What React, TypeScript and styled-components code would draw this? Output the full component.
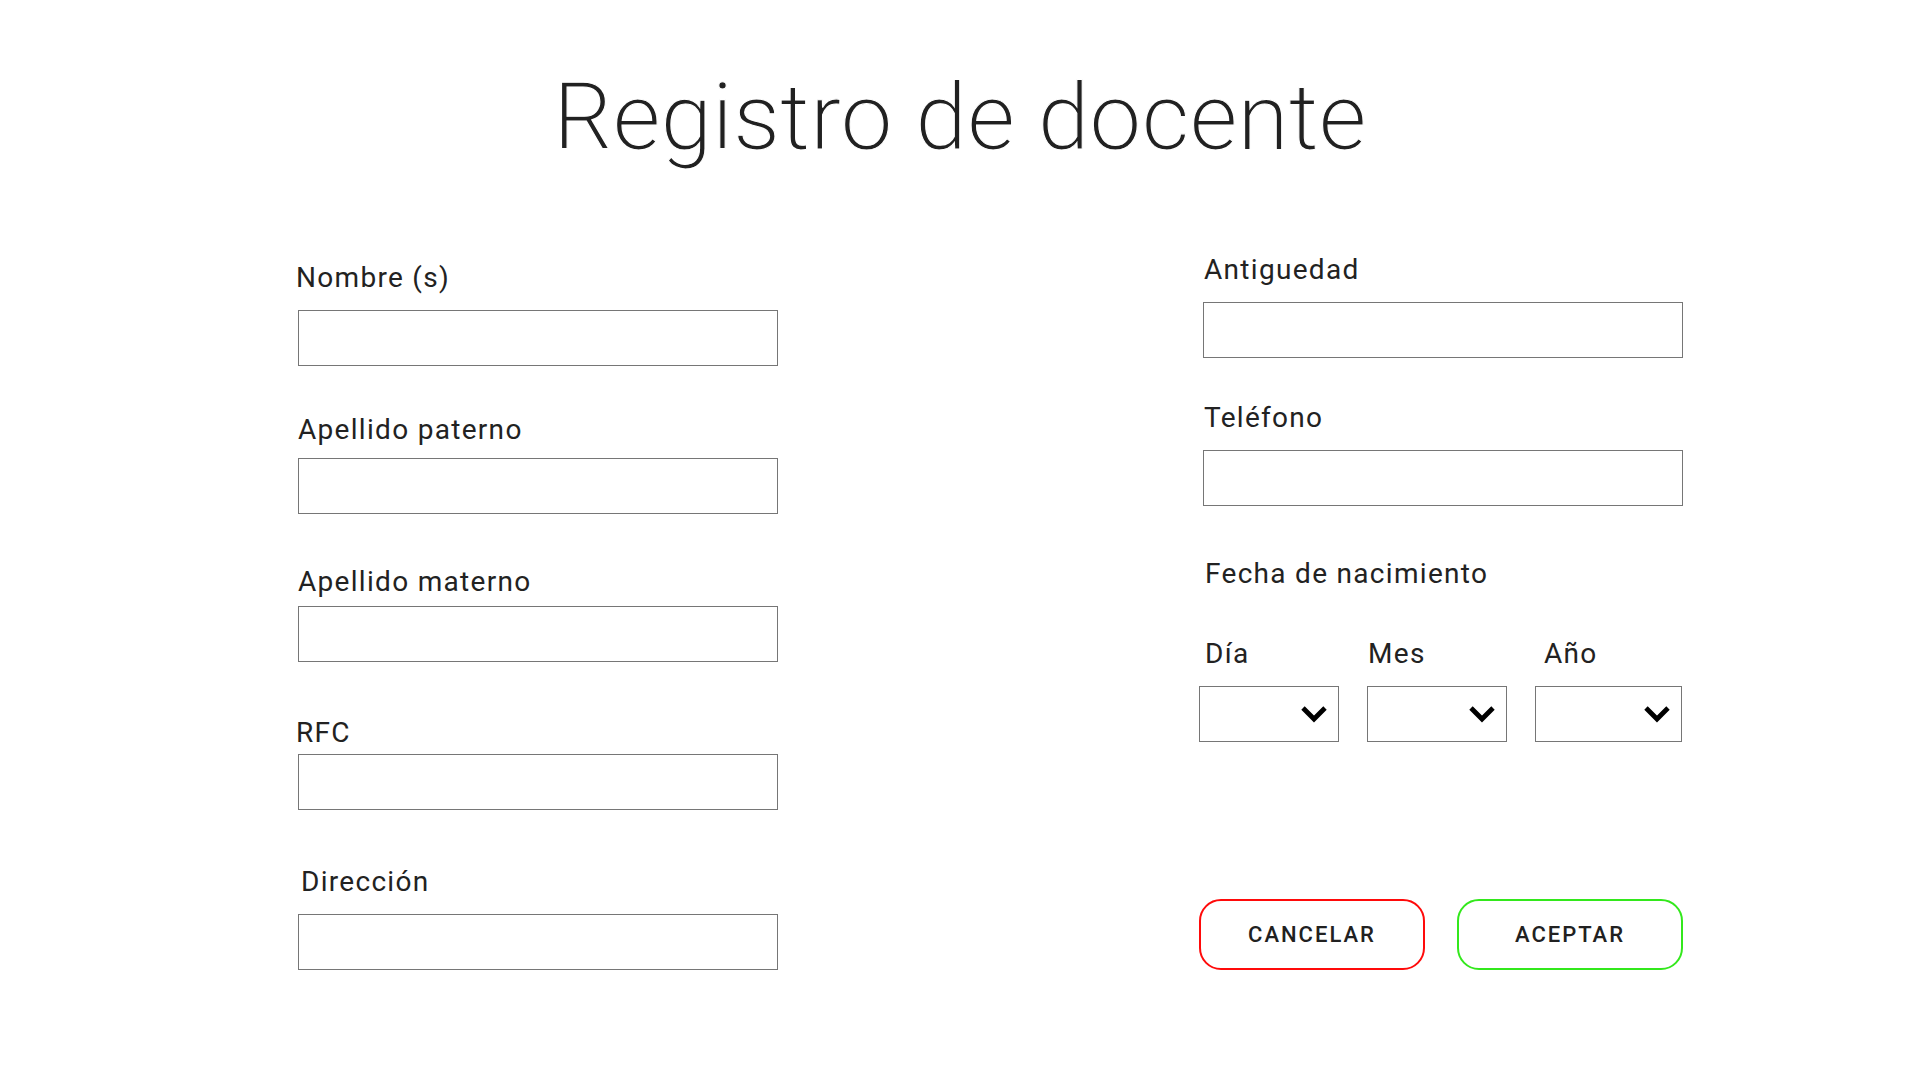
import React from "react";
import styled, { createGlobalStyle } from "styled-components";

const GlobalStyle = createGlobalStyle`
  html, body {
    margin: 0;
    padding: 0;
    background: #ffffff;
  }
  body {
    font-family: Roboto, "Noto Sans", "Liberation Sans", sans-serif;
    color: #212121;
  }
  * { box-sizing: border-box; }
`;

const Page = styled.div`
  width: 1920px;
  min-height: 1080px;
  display: flex;
  flex-direction: column;
  align-items: stretch;
`;

const Title = styled.h1`
  margin: 63px 0 0 0;
  font-family: "Roboto Light", Roboto, "Liberation Sans", sans-serif;
  font-weight: 300;
  font-size: 93px;
  line-height: 109px;
  text-align: center;
  color: #212121;
  letter-spacing: 0;
  -webkit-text-stroke: 1.1px #ffffff;
  paint-order: fill stroke;
`;

const Form = styled.form`
  display: grid;
  grid-template-columns: 480px 484px;
  column-gap: 421px;
  padding-left: 298px;
  align-items: start;
`;

const Column = styled.div<{ $top: number }>`
  display: flex;
  flex-direction: column;
  padding-top: ${(p) => p.$top}px;
`;

const Field = styled.div<{ $mt: number; $gap: number; $shift?: number }>`
  display: flex;
  flex-direction: column;
  margin-top: ${(p) => p.$mt}px;
  gap: ${(p) => p.$gap}px;
  margin-left: ${(p) => p.$shift ?? 0}px;
`;

const Label = styled.label<{ $indent?: number }>`
  display: block;
  font-family: Roboto, "Liberation Sans", sans-serif;
  font-weight: 400;
  font-size: 28px;
  line-height: 32px;
  height: 32px;
  letter-spacing: 1.3px;
  color: #222222;
  margin-left: ${(p) => p.$indent ?? 0}px;
  white-space: nowrap;
`;

const TextInput = styled.input`
  display: block;
  width: 480px;
  height: 56px;
  margin: 0;
  padding: 0 12px;
  border: 1px solid #767676;
  border-radius: 0;
  background: #ffffff;
  font-family: Roboto, sans-serif;
  font-size: 20px;
  outline: none;
`;

const DateRow = styled.div`
  display: grid;
  grid-template-columns: 140px 140px 147px;
  column-gap: 28px;
  margin-top: 48px;
`;

const DateCell = styled.div`
  display: flex;
  flex-direction: column;
  gap: 16px;
`;

const SelectBox = styled.div`
  position: relative;
  height: 56px;
  border: 1px solid #767676;
  background: #ffffff;
`;

const NativeSelect = styled.select`
  appearance: none;
  -webkit-appearance: none;
  width: 100%;
  height: 100%;
  border: none;
  background: transparent;
  font-family: Roboto, sans-serif;
  font-size: 20px;
  padding: 0 40px 0 10px;
  outline: none;
`;

const Chevron = styled.svg`
  position: absolute;
  right: 10px;
  top: 50%;
  transform: translateY(-50%);
  pointer-events: none;
`;

const ButtonRow = styled.div`
  display: flex;
  gap: 32px;
  margin-top: 157px;
`;

const ActionButton = styled.button<{ $color: string }>`
  width: 226px;
  height: 71px;
  border: 2px solid ${(p) => p.$color};
  border-radius: 22px;
  background: #ffffff;
  font-family: Roboto, "Liberation Sans", sans-serif;
  font-weight: 500;
  font-size: 22px;
  letter-spacing: 2px;
  color: #212121;
  text-transform: uppercase;
  cursor: pointer;
  padding: 0;
`;

const ChevronIcon = () => (
  <Chevron width="28" height="18" viewBox="0 0 28 18">
    <polyline
      points="3,3 14,14 25,3"
      fill="none"
      stroke="#000"
      strokeWidth="4.8"
      strokeLinecap="butt"
      strokeLinejoin="miter"
    />
  </Chevron>
);

const DateSelect: React.FC<{ label: string; indent: number }> = ({ label, indent }) => (
  <DateCell>
    <Label $indent={indent}>{label}</Label>
    <SelectBox>
      <NativeSelect defaultValue="">
        <option value=""></option>
      </NativeSelect>
      <ChevronIcon />
    </SelectBox>
  </DateCell>
);

export default function App() {
  return (
    <Page>
      <GlobalStyle />
      <Title>Registro de docente</Title>
      <Form onSubmit={(e) => e.preventDefault()}>
        <Column $top={90}>
          <Field $mt={0} $gap={16}>
            <Label $indent={-2}>Nombre (s)</Label>
            <TextInput type="text" />
          </Field>
          <Field $mt={48} $gap={12}>
            <Label>Apellido paterno</Label>
            <TextInput type="text" />
          </Field>
          <Field $mt={52} $gap={8}>
            <Label>Apellido materno</Label>
            <TextInput type="text" />
          </Field>
          <Field $mt={55} $gap={5}>
            <Label $indent={-2}>RFC</Label>
            <TextInput type="text" />
          </Field>
          <Field $mt={56} $gap={16}>
            <Label $indent={3}>Dirección</Label>
            <TextInput type="text" />
          </Field>
        </Column>
        <Column $top={82}>
          <Field $mt={0} $gap={16} $shift={4}>
            <Label $indent={1}>Antiguedad</Label>
            <TextInput type="text" />
          </Field>
          <Field $mt={44} $gap={16} $shift={4}>
            <Label $indent={1}>Teléfono</Label>
            <TextInput type="tel" />
          </Field>
          <Field $mt={52} $gap={0}>
            <Label $indent={6}>Fecha de nacimiento</Label>
          </Field>
          <DateRow>
            <DateSelect label="Día" indent={6} />
            <DateSelect label="Mes" indent={1} />
            <DateSelect label="Año" indent={9} />
          </DateRow>
          <ButtonRow>
            <ActionButton type="button" $color="#ff0a0a">Cancelar</ActionButton>
            <ActionButton type="submit" $color="#33e81c">Aceptar</ActionButton>
          </ButtonRow>
        </Column>
      </Form>
    </Page>
  );
}
